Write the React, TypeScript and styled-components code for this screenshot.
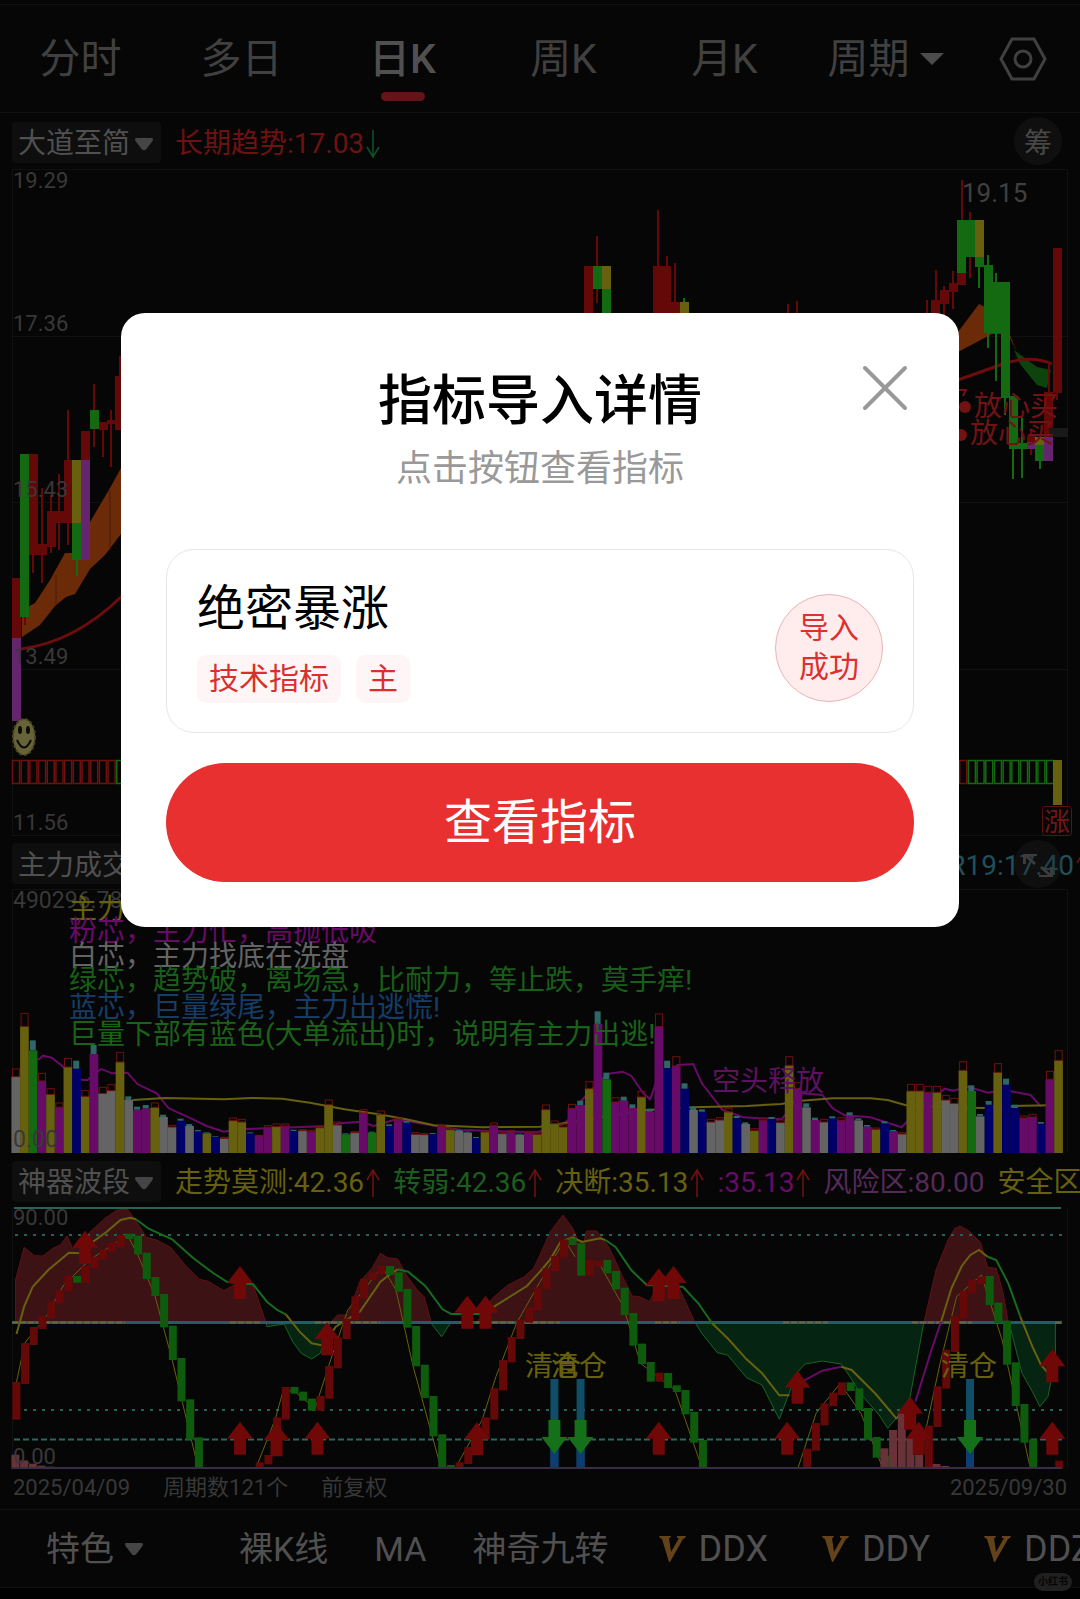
import React from "react";
import styled, { createGlobalStyle } from "styled-components";

const FONT = 'Roboto, "Noto Sans CJK SC", "Noto Sans", sans-serif';

const color = {
  bg: "#060606",
  line: "#111111",
  chip: "#0e0e0e",
  axis: "#383838",
  muted: "#404040",
  text: "#505050",
  red: "#6e1111",
  darkRed: "#650808",
  green: "#136a10",
  yellow: "#67610f",
  magenta: "#680b68",
  purple: "#64246e",
  white: "#646464",
  blue: "#00006a",
  teal: "#2d6767",
  orange: "#6b2a08",
};

const GlobalStyle = createGlobalStyle`
  * { box-sizing: border-box; }
  body { margin: 0; background: #000; font-family: ${FONT}; }
  button, select { font: inherit; color: inherit; background: none; border: 0; padding: 0; margin: 0; cursor: pointer; }
  h1, h2, h3, p { margin: 0; font-weight: 400; }
`;

/* ---------- page ---------- */

const Screen = styled.main`
  position: relative;
  overflow: hidden;
  background: ${color.bg};
  padding-top: 4px;
`;

const Tabs = styled.nav`
  display: flex;
  height: 109px;
  border-top: 1px solid ${color.line};
  border-bottom: 1px solid ${color.line};
  color: ${color.muted};
  font-size: 41px;
  line-height: 48px;
`;

const Tab = styled.button<{ $active?: boolean }>`
  flex: 1;
  position: relative;
  color: ${(p) => (p.$active ? color.text : "inherit")};
  font-weight: ${(p) => (p.$active ? 500 : 400)};

  &::after {
    content: "";
    display: ${(p) => (p.$active ? "block" : "none")};
    position: absolute;
    left: calc(50% - 22px);
    bottom: 11px;
    width: 44px;
    height: 9px;
    border-radius: 5px;
    background: #621518;
  }
`;

const PeriodTab = styled.div`
  flex: 1;
  display: flex;
  align-items: center;
  justify-content: center;
`;

const SettingsButton = styled.button`
  width: 114px;
  display: flex;
  align-items: center;
  justify-content: center;
`;

const PickerBox = styled.label<{ $gap: number }>`
  display: inline-flex;
  align-items: center;
  gap: ${(p) => p.$gap}px;
`;

const PickerSelect = styled.select`
  appearance: none;
  outline: none;
`;

const HiddenText = styled.span`
  position: absolute;
  width: 1px;
  height: 1px;
  overflow: hidden;
  clip-path: inset(50%);
`;

const IndicatorBar = styled.div<{ $height: number }>`
  position: relative;
  display: flex;
  align-items: center;
  gap: 14px;
  height: ${(p) => p.$height}px;
  padding: 2px 0 0 12px;
  overflow: hidden;
  font-size: 28px;
  line-height: 36px;
  white-space: nowrap;
`;

const Chip = styled.div`
  flex: none;
  width: 149px;
  height: 41px;
  padding: 4px 0 0 6px;
  display: flex;
  align-items: center;
  border-radius: 4px;
  background: ${color.chip};
  color: ${color.text};
`;

const Readings = styled.div<{ $end?: boolean }>`
  flex: 1;
  display: flex;
  gap: 13px;
  padding-top: 4px;
  justify-content: ${(p) => (p.$end ? "flex-end" : "flex-start")};
  margin-right: ${(p) => (p.$end ? "-10px" : "0")};
`;

const Reading = styled.span<{ $color: string }>`
  flex: none;
  display: inline-flex;
  align-items: center;
  gap: 2px;
  color: ${(p) => p.$color};
`;

const RoundButton = styled.button`
  position: absolute;
  right: 18px;
  top: 4px;
  width: 48px;
  height: 48px;
  padding-top: 5px;
  border-radius: 50%;
  background: rgba(36, 36, 36, 0.3);
  color: #484848;
  display: flex;
  align-items: center;
  justify-content: center;
`;

const Chart = styled.svg`
  display: block;
  width: 100%;
  height: auto;
  font-family: ${FONT};
`;

const DateRow = styled.div`
  display: flex;
  align-items: center;
  gap: 33px;
  height: 40px;
  padding: 0 13px 2px;
  font-size: 22px;
  line-height: 32px;
  color: ${color.axis};

  time:last-child { margin-left: auto; }
`;

const Toolbar = styled.nav`
  display: flex;
  align-items: center;
  gap: 46px;
  height: 79px;
  padding-left: 46px;
  overflow: hidden;
  border-top: 1px solid ${color.line};
  border-bottom: 1px solid ${color.line};
  font-size: 34px;
  line-height: 48px;
  color: ${color.text};
  white-space: nowrap;
`;

const ToolbarDivider = styled.span`
  width: 1px;
  height: 40px;
  margin-right: 3px;
  background: #161616;
`;

const ToolButton = styled.button`
  flex: none;
`;

const VipTools = styled.div`
  flex: none;
  display: flex;
  gap: 54px;
  padding-left: 4px;
  font-size: 36px;
`;

const VipButton = styled.button`
  flex: none;
  display: inline-flex;
  align-items: center;
  gap: 13px;
`;

const SystemStrip = styled.footer`
  height: 12px;
  background: #000;
`;

const Watermark = styled.span`
  position: absolute;
  right: 8px;
  bottom: 9px;
  width: 38px;
  height: 18px;
  border-radius: 9px;
  background: #202020;
  color: #050505;
  font-size: 10px;
  font-weight: 700;
  line-height: 18px;
  text-align: center;
`;

/* ---------- dialog ---------- */

const Overlay = styled.div`
  position: absolute;
  inset: 0;
  padding: 313px 121px 0;
`;

const Dialog = styled.section`
  position: relative;
  padding: 45px;
  border-radius: 24px;
  background: #fff;
  text-align: center;
`;

const CloseButton = styled.button`
  position: absolute;
  right: 49px;
  top: 50px;
  width: 50px;
  height: 50px;
`;

const DialogTitle = styled.h2`
  padding-top: 4px;
  font-size: 54px;
  font-weight: 500;
  line-height: 80px;
  color: #000;
`;

const DialogHint = styled.p`
  margin-bottom: 53px;
  font-size: 36px;
  line-height: 54px;
  color: #999;
`;

const Card = styled.article`
  display: flex;
  align-items: center;
  justify-content: space-between;
  height: 184px;
  margin-bottom: 30px;
  padding: 0 30px 6px;
  border: 1px solid #e6e6e6;
  border-radius: 28px;
`;

const CardName = styled.h3`
  margin-bottom: 11px;
  font-size: 48px;
  line-height: 70px;
  text-align: left;
  color: #000;
`;

const Tags = styled.div`
  display: flex;
  gap: 15px;
`;

const Tag = styled.span`
  padding: 0 12px;
  border-radius: 9px;
  background: #fef6f6;
  color: #d9302f;
  font-size: 30px;
  line-height: 48px;
`;

const Status = styled.p`
  display: flex;
  align-items: center;
  justify-content: center;
  width: 108px;
  height: 108px;
  padding: 0 22px 2px;
  margin-top: 20px;
  border: 1px solid #eab2b6;
  border-radius: 50%;
  background: #ffeded;
  color: #dd3030;
  font-size: 30px;
  line-height: 39px;
`;

const ViewButton = styled.button`
  display: block;
  width: 100%;
  height: 119px;
  border-radius: 60px;
  background: #e93030;
  color: #fff;
  font-size: 48px;
  line-height: 70px;
`;

/* ---------- small drawings ---------- */

const Caret = ({ soft }: { soft?: boolean }) =>
  soft ? (
    <svg width="20" height="14" viewBox="0 0 20 14" aria-hidden="true">
      <path d="M1.5 1h17q1 1.500 0 3L12 12.500q-2 1.500-4 0L1.500 4q-1-1.500 0-3z" fill="#454545" />
    </svg>
  ) : (
    <svg width="24" height="12" viewBox="0 0 24 12" aria-hidden="true">
      <path d="M0 0h24L12 12z" fill="#4c4c4c" />
    </svg>
  );

const Trend = ({ up, stroke }: { up?: boolean; stroke: string }) => (
  <svg width="14" height="28" viewBox="0 0 14 28" fill="none" stroke={stroke} strokeWidth="1.600" aria-hidden="true">
    <path d={up ? "M7 28V1M1 11L7 1l6 10" : "M7 0v27M1 17l6 10 6-10"} />
  </svg>
);

const VipMark = () => (
  <svg width="27" height="26" viewBox="0 0 27 26" aria-hidden="true">
    <path d="M0 0h12l-1 2h-1l2 14L20 2h-2V0h9l-1 2-2 1L11 26h-1L3 3 1 2z" fill="#65431a" />
  </svg>
);

type PickerProps = { label: string; value: string; gap?: number; soft?: boolean };

const Picker = ({ label, value, gap = 3, soft = true }: PickerProps) => (
  <PickerBox $gap={gap}>
    <HiddenText>{label}</HiddenText>
    <PickerSelect defaultValue={value}>
      <option value={value}>{value}</option>
    </PickerSelect>
    <Caret soft={soft} />
  </PickerBox>
);

/* ---------- price chart ---------- */

type Candle = [x: number, top: number, bottom: number, fill: string];
type Wick = [x: number, top: number, bottom: number, stroke: string];

const { darkRed: R, green: G, yellow: Y, purple: P } = color;

const candles: Candle[] = [
  [12, 578, 638, R], [12, 638, 721, P], [20, 454, 617, G], [29, 454, 555, R],
  [38, 544, 555, R], [47, 511, 547, R], [55, 511, 523, R], [64, 460, 523, R],
  [72, 460, 523, Y], [72, 523, 560, G], [81, 431, 460, R], [81, 460, 560, P],
  [90, 410, 429, G], [99, 422, 430, R], [107, 420, 424, R], [115, 376, 430, R],
  [584, 266, 340, R], [593, 266, 289, G], [602, 266, 289, Y], [602, 289, 340, G],
  [653, 266, 340, R], [662, 266, 340, R], [671, 302, 340, R], [680, 302, 340, Y],
  [931, 300, 340, R], [940, 290, 304, R], [949, 283, 292, R], [957, 220, 273, G],
  [957, 273, 285, R], [966, 220, 257, G], [975, 220, 257, Y], [975, 257, 267, G],
  [984, 265, 333, G], [992, 282, 333, G], [1001, 282, 398, G], [1009, 396, 449, G],
  [1018, 443, 449, G], [1027, 436, 442, R], [1027, 442, 449, P], [1035, 437, 445, Y],
  [1035, 445, 461, G], [1044, 392, 437, R], [1044, 437, 461, P], [1053, 248, 393, R],
];

const wicks: Wick[] = [
  [25, 617, 625, R], [33, 555, 573, R], [42, 488, 583, R], [51, 495, 553, R],
  [59, 474, 550, R], [68, 410, 545, R], [77, 560, 576, G], [94, 384, 447, R],
  [103, 422, 457, R], [111, 410, 467, R], [120, 356, 430, R], [597, 236, 303, R],
  [658, 210, 266, R], [667, 256, 266, R], [675, 263, 302, R], [684, 298, 302, G],
  [788, 304, 340, R], [797, 301, 340, R], [927, 300, 340, R], [936, 270, 300, R],
  [944, 286, 318, R], [953, 271, 309, R], [962, 180, 220, R], [970, 212, 278, R],
  [979, 267, 288, G], [988, 255, 348, G], [996, 273, 381, G], [1005, 398, 415, G],
  [1013, 449, 479, G], [1022, 418, 478, G], [1031, 430, 455, R], [1040, 461, 469, G],
  [1049, 362, 392, R], [1057, 393, 400, R],
];

const stripCells = Array.from({ length: 120 }, (_, i) => i);
const isGreenCell = (i: number) => (i >= 12 && i < 40) || i >= 110;

const PriceChart = () => (
  <Chart viewBox="0 169 1080 667" role="img" aria-label="日K 价格走势">
    <g stroke={color.line} fill="none">
      <path d="M12.500 836V169.500H1067.500V836M12 336.500h1056M12 502.500h1056M12 669.500h1056M12 835.500h1056" />
    </g>
    <path d="M22 610L35 603 50 580 65 553H72L90 522 110 488 121 468V534L105 555 90 569 75 594 66 597 55 606 40 625 22 637z" fill={color.orange} />
    <path d="M56 575v30M110 490v60" stroke="#4a1c06" />
    <path d="M958 332L979 304 985 307 1008 330 1017 352 1008 334H992L958 352z" fill={color.orange} />
    <path d="M1014 350L1037 367 1051 370 1047 388 1037 385 1020 364z" fill="#0d430c" />
    <path d="M21 649Q75 642 122 596M940 386Q970 376 1000 365T1052 364" fill="none" stroke="#6c0d0d" strokeWidth="3" />
    {wicks.map(([x, top, bottom, stroke], i) => (
      <path key={i} d={`M${x} ${top}V${bottom}`} stroke={stroke} strokeWidth="2" />
    ))}
    {candles.map(([x, top, bottom, fill], i) => (
      <rect key={i} x={x} y={top} width="9" height={bottom - top} fill={fill} />
    ))}
    <path d="M1049 428h19v9h-19z" fill="#191919" />
    <g fill="none" strokeWidth="1.500">
      {stripCells.map((i) => (
        <rect key={i} x={12.5 + i * 8.69} y="760.500" width="7" height="23" stroke={isGreenCell(i) ? color.green : color.red} />
      ))}
    </g>
    <path d="M1053 760h9v45h-9z" fill={color.yellow} />
    <g>
      <ellipse cx="24" cy="737" rx="11" ry="18" fill="#66623a" stroke="#4b4718" strokeWidth="2" strokeDasharray="3 2" />
      <ellipse cx="20" cy="730" rx="2" ry="4" fill="#0c0c04" />
      <ellipse cx="28" cy="730" rx="2" ry="4" fill="#0c0c04" />
      <path d="M17 740q7 15 14 0" fill="none" stroke="#0c0c04" strokeWidth="2" />
    </g>
    <g fill={color.axis} fontSize="22">
      <text x="13" y="188">19.29</text>
      <text x="13" y="331">17.36</text>
      <text x="13" y="497">15.43</text>
      <text x="13" y="664">13.49</text>
      <text x="13" y="830">11.56</text>
    </g>
    <text x="962" y="202" fontSize="26" fill={color.muted}>19.15</text>
    <g fill="#721313" fontSize="28">
      <ellipse cx="965" cy="407" rx="6" ry="6" />
      <ellipse cx="961" cy="435" rx="6" ry="6" />
      <path d="M958 390h8l-3 6" fill="none" stroke="#721313" strokeWidth="2" />
      <text x="974" y="416">放心买</text>
      <text x="970" y="443">放心买</text>
    </g>
    <rect x="1042.500" y="806.500" width="29" height="29" rx="3" fill="none" stroke="#5c1212" />
    <text x="1044" y="831" fontSize="26" fill="#721717">涨</text>
  </Chart>
);

/* ---------- volume chart ---------- */

/* Each entry: body colour, body top, cap colour, cap top (grid units, measured down the plot). */
const VOLUME = `w590r567 y439r400 g511t481 m603r580 y643r626 m682r669 y561r535 b566t542 y649r632 m522t495
w640r622 w632r614 y546r517 w660t649 m689t680 m685t675 y682r669 w711t704 w741r736 b722t716
w738t732 b754t750 y760t757 b770t768 w775r772 y722r714 y726r718 b760t757 m768r766 m742r737
y740r732 m738r732 b753t749 w752r749 m755r751 y743r738 y674r660 w735r726 g763t760 w758r755
m699r689 g758t755 y703r693 b738t733 m720r714 b728t723 w763r758 w764r761 b762t759 m740r736
y749r746 w753t750 w758t755 b774t771 y756r753 m736r729 w761r758 m756r751 w764t761 m758r754
y763r759 y689r675 y731r723 y741r732 m685r673 m675t662 y626r605 m432t394 g598t578 m666r653
m662t650 m684t673 y651r634 m695t686 m440r402 b564t542 m558r530 b626t610 w690t680 b695t688
w726r718 w720r713 y696r685 b714t708 w732t727 y752r746 m721r715 b717t711 w728r720 y556r530
m626r608 w682t670 m720t713 w726r718 b715t709 m721r713 m706t697 w721t715 m740t735 y748r744
b730t724 m753t750 w762r758 y633r613 y633r613 m637r619 y637r619 w660r646 w670r655 y571r545
g633t616 w709t702 b674t663 y577r551 b614t596 b684t674 m714r708 m711r703 b731t726 m598r574
y541r512`;

const bodyColor: Record<string, string> = {
  w: color.white, y: color.yellow, g: color.green, m: color.magenta, b: color.blue,
};

const volumes = VOLUME.split(/\s+/).map((entry) => {
  const [, kind, top, cap, capTop] = entry.match(/(\w)(\d+)(\w)(\d+)/)!;
  return { fill: bodyColor[kind], top: Number(top), rising: cap === "r", capTop: Number(capTop) };
});

const STEP = 8.69;
const FIRST_X = 11.4;
/* Plot grid to chart pixels. */
const gx = (x: number) => x / 2.904;
const gy = (y: number) => y / 3;

const points = (list: number[]) => {
  const out: string[] = [];
  for (let i = 0; i < list.length; i += 2) out.push(`${gx(list[i]).toFixed(1)},${gy(list[i + 1]).toFixed(1)}`);
  return out.join(" ");
};

const notes: [y: number, fill: string, text: string][] = [
  [39, color.yellow, "主力"],
  [61, color.magenta, "粉芯，主力忙，高抛低吸"],
  [86, color.white, "白芯，主力找底在洗盘"],
  [110, "#185e18", "绿芯，趋势破，离场急，比耐力，等止跌，莫手痒!"],
  [137, "#153d66", "蓝芯，巨量绿尾，主力出逃慌!"],
  [164, "#1a6218", "巨量下部有蓝色(大单流出)时，说明有主力出逃!"],
];

const VolumeChart = () => (
  <Chart viewBox="0 9 1080 264" role="img" aria-label="主力成交量">
    <path d="M12.500 273V9.500H1067.500V273" fill="none" stroke={color.line} />
    <g fill="none" strokeWidth="2">
      <polyline stroke={color.magenta} points={points([
        110, 540, 125, 527, 150, 533, 187, 563, 215, 590, 240, 600, 255, 600, 275, 580, 295, 567, 325, 580, 370, 578, 400, 613,
        455, 640, 490, 685, 550, 713, 600, 738, 650, 755, 690, 748, 770, 745, 960, 738, 985, 730, 1050, 725, 1085, 738, 1150, 718,
        1250, 735, 1340, 750, 1560, 757, 1600, 745, 1635, 732, 1650, 720, 1690, 660, 1763, 582, 1808, 575, 1833, 587, 1868, 640,
        1888, 658, 1908, 600, 1968, 555, 2013, 552, 2038, 610, 2098, 690, 2158, 712, 2270, 718, 2328, 640, 2388, 645, 2418, 685,
        2453, 706, 2528, 712, 2618, 742, 2648, 710, 2733, 635, 2743, 626, 2768, 632, 2813, 620, 2868, 638, 2918, 630, 2993, 645, 3023, 680,
      ])} />
      <polyline stroke={color.yellow} points={points([
        385, 660, 480, 654, 650, 658, 730, 654, 820, 656, 900, 668, 1000, 688, 1100, 703, 1180, 718, 1260, 736, 1400, 742,
        1568, 740, 1700, 720, 1850, 692, 2008, 682, 2168, 678, 2268, 672, 2328, 662, 2418, 655, 2528, 655, 2578, 660, 2628, 675,
        2760, 682, 2858, 684, 2968, 677, 3053, 676,
      ])} />
    </g>
    {volumes.map(({ fill, top, rising, capTop }, i) => {
      const x = FIRST_X + i * STEP;
      const capHeight = gy(top - capTop);
      return (
        <g key={i}>
          <rect x={x} y={gy(top)} width="8.700" height={273 - gy(top)} fill={fill} />
          {rising ? (
            <rect x={x + 1} y={gy(capTop)} width="7" height={capHeight} fill="none" stroke="#701111" />
          ) : (
            <rect x={x + 1} y={gy(capTop)} width="6" height={capHeight} fill={color.teal} />
          )}
        </g>
      );
    })}
    <g fontSize="23" fill={color.axis}>
      <text x="13" y="28">490296.78</text>
      <text x="13" y="267">0.00</text>
    </g>
    <g fontSize="28">
      {notes.map(([y, fill, text]) => (
        <text key={text} x="69" y={y} fill={fill}>{text}</text>
      ))}
      <text x="712" y="211" fill="#5d125f">空头释放</text>
    </g>
  </Chart>
);

/* ---------- oscillator chart ---------- */

/* Runs of candles: first index, then colour + top-bottom for each following index. */
const OSC_RUNS: [number, string][] = [
  [0, "r666-779 r549-672 r501-555 r468-507 r424-474 r391-430 r348-395 g348-368 r318-368 r290-325 r268-298 r248-275 r225-262 g221-237 g227-283 g278-357 g351-408 g402-502 g497-600 g594-724 g718-839 g832-922"],
  [28, "r907-922 r885-913 r772-885 r681-779 g681-701 g695-722 g716-752 r708-752 r618-716 r532-625 r476-537 r409-480 r356-415 r338-360 r318-343 g318-345 g337-395 g387-503 g498-619 g614-714 g708-829 g823-922 g915-922 r907-922 r861-912 r835-868 r772-838 r685-779 r600-691 r531-607 r480-537 r443-488 r382-450 r325-388 r288-333 r238-293 g235-255 g250-347 r300-347 r303-320 g300-340 g333-388 g383-465 g459-557 g551-612 g606-665 r638-665 g639-684 g676-696 g690-763 g756-848 g840-922"],
  [91, "r866-922 r789-872 r730-796 r698-738 r667-705 g667-693 g685-750 g744-839 g831-893 g887-922"],
  [105, "r797-922 r679-801 r569-686 r468-576 r392-474 r360-400 r350-372 g348-435 g428-490 g482-614 g607-738 g732-848 g838-922"],
  [120, "r902-926"],
];

const oscCandles = OSC_RUNS.flatMap(([start, run]) =>
  run.split(" ").map((entry, i) => {
    const [top, bottom] = entry.slice(1).split("-").map(Number);
    return { index: start + i, up: entry[0] === "r", top, bottom };
  }),
);

const redAreas = [
  [45, 487, 45, 360, 70, 262, 100, 287, 125, 288, 155, 264, 175, 255, 195, 228, 212, 268, 240, 240, 265, 212, 305, 175, 340, 150, 370, 148, 400, 190, 425, 232, 455, 240, 495, 262, 540, 318, 580, 358, 605, 364, 650, 392, 680, 375, 735, 375, 755, 435, 772, 487],
  [960, 487, 980, 465, 1010, 465, 1045, 365, 1080, 325, 1105, 280, 1125, 293, 1155, 297, 1180, 345, 1210, 388, 1232, 410, 1252, 487],
  [1385, 487, 1430, 415, 1475, 375, 1520, 352, 1550, 325, 1568, 285, 1598, 215, 1635, 165, 1663, 205, 1678, 240, 1696, 245, 1703, 213, 1733, 213, 1768, 260, 1808, 350, 1836, 408, 1858, 410, 1886, 425, 1913, 370, 1968, 375, 2018, 487],
  [2683, 487, 2698, 420, 2718, 330, 2753, 240, 2773, 205, 2788, 198, 2813, 212, 2848, 248, 2868, 322, 2893, 325, 2913, 400, 2928, 487],
];

const greenAreas = [
  [772, 487, 775, 500, 825, 492, 850, 545, 875, 580, 905, 597, 930, 580, 958, 487],
  [1250, 487, 1282, 530, 1310, 487],
  [2018, 487, 2038, 520, 2083, 578, 2113, 585, 2168, 653, 2213, 675, 2263, 778, 2313, 640, 2338, 612, 2388, 603, 2443, 612, 2468, 650, 2498, 700, 2553, 765, 2578, 805, 2618, 755, 2643, 710, 2683, 487],
  [2930, 487, 2948, 560, 2968, 640, 2998, 695, 3020, 740, 3043, 710, 3065, 600, 3065, 487],
];

const oscLines: [string, number[]][] = [
  [Y, [48, 522, 70, 440, 95, 380, 140, 330, 200, 278, 240, 280, 270, 245, 310, 215, 350, 180, 378, 173, 395, 178]],
  ["#176b1e", [395, 178, 430, 205, 500, 238, 560, 293, 620, 340, 660, 366, 735, 373, 775, 425, 805, 450, 830, 463]],
  [Y, [830, 463, 870, 515, 905, 550, 940, 557, 975, 500, 1045, 455, 1105, 365, 1130, 345, 1155, 328]],
  ["#176b1e", [1155, 328, 1185, 335, 1235, 378, 1285, 448, 1310, 462, 1400, 462]],
  [Y, [1400, 465, 1435, 440, 1530, 378, 1568, 335, 1598, 298, 1628, 245, 1663, 232, 1690, 246, 1743, 235, 1758, 240]],
  ["#176b1e", [1758, 240, 1788, 262, 1833, 330, 1878, 375, 1968, 380, 1983, 380, 2028, 430, 2068, 490]],
  [Y, [2068, 490, 2113, 535, 2168, 598, 2213, 640, 2263, 706, 2293, 706]],
  [color.magenta, [2320, 670, 2388, 632, 2443, 620]],
  [Y, [2443, 620, 2473, 630, 2543, 702, 2603, 775, 2643, 745]],
  [color.magenta, [2658, 725, 2708, 560, 2733, 485]],
  [Y, [2733, 485, 2763, 385, 2793, 318, 2818, 285, 2843, 270, 2868, 290]],
  ["#176b1e", [2868, 290, 2893, 300, 2928, 370, 2963, 470]],
  [Y, [2963, 470, 2998, 560, 3023, 615, 3053, 650]],
  [Y, [48, 666, 72, 549, 135, 468, 185, 375, 260, 300, 370, 225, 400, 283, 450, 408, 500, 600, 575, 922]],
  [Y, [745, 920, 800, 775, 820, 700, 850, 690, 915, 745, 960, 600, 1010, 450, 1110, 320, 1150, 390, 1200, 620, 1280, 922]],
  [Y, [1330, 910, 1400, 780, 1440, 650, 1500, 490, 1560, 380, 1640, 240, 1670, 290]],
  [Y, [1740, 310, 1810, 440, 1860, 610, 1960, 690, 2038, 922]],
  [Y, [2318, 922, 2370, 760, 2440, 670, 2500, 760, 2560, 915]],
  [Y, [2680, 850, 2730, 610, 2778, 410, 2850, 345, 2910, 540, 2990, 915]],
];

const upArrows = [
  [247, 212], [697, 318], [950, 487], [1357, 407], [1410, 407], [1913, 325], [1956, 318], [2316, 632],
  [2643, 710], [2668, 785], [3056, 568], [697, 785], [803, 790], [922, 785], [1385, 787], [1913, 785],
  [2286, 785], [3056, 785],
];

const clearSignals = [1610, 1686, 2817];

const histogram = [
  [0, 884], [1, 901], [2, 911], [3, 917], [4, 920], [5, 922],
  [100, 865], [101, 810], [102, 757], [103, 833], [104, 884], [106, 912], [107, 918],
];

const OscillatorChart = () => (
  <Chart viewBox="0 47 1080 262" role="img" aria-label="神器波段">
    <path d="M12.500 309V47M1067.500 309V47" stroke={color.line} />
    {redAreas.map((area, i) => (
      <polygon key={i} points={points(area)} fill="#3d1214" stroke="#621012" strokeWidth="1" />
    ))}
    {greenAreas.map((area, i) => (
      <polygon key={i} points={points(area)} fill="#052411" stroke="#176424" strokeWidth="1" />
    ))}
    <g strokeWidth="2">
      <path d="M14 48H1061" stroke="#2c6156" />
      <path d="M15 75H1062" stroke="#256157" strokeDasharray="3 6" />
      <path d="M15 250H1062" stroke="#256157" strokeDasharray="3 6" />
      <path d="M14 279.500H1062" stroke="#256861" strokeDasharray="6 3" />
      <path d="M12 162.500H1062" stroke="#245b64" strokeWidth="3" />
      <path d="M12 162.500H125M230 162.500h30M315 162.500h65M460 162.500h100M655 162.500h25M783 162.500h45M912 162.500h60M1055 162.500h7" stroke="#686b35" strokeDasharray="6 2" />
    </g>
    {oscLines.map(([stroke, line], i) => (
      <polyline key={i} points={points(line)} fill="none" stroke={stroke} strokeWidth={i < 13 ? 2 : 1} />
    ))}
    {oscCandles.map(({ index, up, top, bottom }) => (
      <rect key={index} x={FIRST_X + 1 + index * STEP} y={gy(top)} width="8" height={gy(bottom - top)} fill={up ? "#650808" : "#0f5b0e"} />
    ))}
    {histogram.map(([index, top]) => (
      <rect key={index} x={FIRST_X + index * STEP} y={gy(top)} width="8" height={gy(926 - top)} fill="#673338" />
    ))}
    <path d="M12 308H1062" stroke="#3b2c45" strokeWidth="2" />
    {upArrows.map(([x, y], i) => (
      <path key={i} transform={`translate(${gx(x)} ${gy(y)})`} d="M0 0L13 17H6V33H-6V17H-13z" fill="#700808" />
    ))}
    {clearSignals.map((x) => (
      <g key={x} transform={`translate(${gx(x)} 0)`}>
        <path d="M-4 219h8v88h-8z" fill="#104e68" />
        <path d="M-4 275h8v32h-8z" fill="#0d3e72" />
        <path d="M-6 260H6V277H13L0 294-13 277H-6z" fill="#15701a" />
      </g>
    ))}
    <g fontSize="28" fill={color.yellow}>
      <text x="525" y="216">清仓</text>
      <text x="551" y="216">清仓</text>
      <text x="941" y="216">清仓</text>
    </g>
    <g fontSize="22" fill={color.axis}>
      <text x="13" y="65">90.00</text>
      <text x="13" y="304">0.00</text>
    </g>
  </Chart>
);

/* ---------- app ---------- */

const tools = ["裸K线", "MA", "神奇九转"];
const vipTools = ["DDX", "DDY", "DDZ"];

export default function App() {
  return (
    <>
      <GlobalStyle />
      <Screen>
        <Tabs aria-label="周期">
          <Tab>分时</Tab>
          <Tab>多日</Tab>
          <Tab $active aria-current="true">日K</Tab>
          <Tab>周K</Tab>
          <Tab>月K</Tab>
          <PeriodTab>
            <Picker label="更多周期" value="周期" gap={10} soft={false} />
          </PeriodTab>
          <SettingsButton aria-label="设置">
            <svg width="48" height="44" viewBox="0 0 48 44" fill="none" stroke="#404040" strokeWidth="3">
              <path d="M13 2h22l11 20-11 20H13L2 22z" />
              <circle cx="24" cy="22" r="8" />
            </svg>
          </SettingsButton>
        </Tabs>

        <IndicatorBar $height={56}>
          <Chip><Picker label="主图指标" value="大道至简" /></Chip>
          <Readings>
            <Reading $color={color.red}>长期趋势:17.03<Trend stroke="#0d5128" /></Reading>
          </Readings>
          <RoundButton>筹</RoundButton>
        </IndicatorBar>
        <PriceChart />

        <IndicatorBar $height={53}>
          <Chip><Picker label="副图指标一" value="主力成交" /></Chip>
          <Readings $end>
            <Reading $color="#20505c">R19:17.40<Trend up stroke={color.red} /></Reading>
          </Readings>
          <RoundButton aria-label="展开">
            <svg width="32" height="28" viewBox="0 0 32 28" fill="#3c3c3c" stroke="#3c3c3c" strokeWidth="3">
              <path d="M1 1h14v2H4v8H1zM31 24H17v-2h11v-8h3z" strokeWidth="0" />
              <path d="M3 2l10 9M29 23l-10-9" />
            </svg>
          </RoundButton>
        </IndicatorBar>
        <VolumeChart />

        <IndicatorBar $height={54}>
          <Chip><Picker label="副图指标二" value="神器波段" /></Chip>
          <Readings>
            <Reading $color={color.yellow}>走势莫测:42.36<Trend up stroke={color.red} /></Reading>
            <Reading $color="#1b5e1e">转弱:42.36<Trend up stroke={color.red} /></Reading>
            <Reading $color={color.yellow}>决断:35.13<Trend up stroke={color.red} /></Reading>
            <Reading $color={color.magenta}>:35.13<Trend up stroke={color.red} /></Reading>
            <Reading $color="#552a59">风险区:80.00</Reading>
            <Reading $color={color.yellow}>安全区</Reading>
          </Readings>
        </IndicatorBar>
        <OscillatorChart />

        <DateRow>
          <time>2025/04/09</time>
          <span>周期数121个</span>
          <span>前复权</span>
          <time>2025/09/30</time>
        </DateRow>

        <Toolbar aria-label="指标">
          <Picker label="特色指标" value="特色" gap={10} />
          <ToolbarDivider />
          {tools.map((name) => (
            <ToolButton key={name}>{name}</ToolButton>
          ))}
          <VipTools>
            {vipTools.map((name) => (
              <VipButton key={name}><VipMark />{name}</VipButton>
            ))}
          </VipTools>
        </Toolbar>
        <SystemStrip />
        <Watermark>小红书</Watermark>

        <Overlay>
          <Dialog role="dialog" aria-modal="true" aria-labelledby="import-title">
            <CloseButton aria-label="关闭">
              <svg width="50" height="50" viewBox="0 0 50 50" stroke="#999" strokeWidth="4" strokeLinecap="round">
                <path d="M5 5l40 40M45 5L5 45" />
              </svg>
            </CloseButton>
            <DialogTitle id="import-title">指标导入详情</DialogTitle>
            <DialogHint>点击按钮查看指标</DialogHint>
            <Card>
              <div>
                <CardName>绝密暴涨</CardName>
                <Tags>
                  <Tag>技术指标</Tag>
                  <Tag>主</Tag>
                </Tags>
              </div>
              <Status>导入成功</Status>
            </Card>
            <ViewButton>查看指标</ViewButton>
          </Dialog>
        </Overlay>
      </Screen>
    </>
  );
}
